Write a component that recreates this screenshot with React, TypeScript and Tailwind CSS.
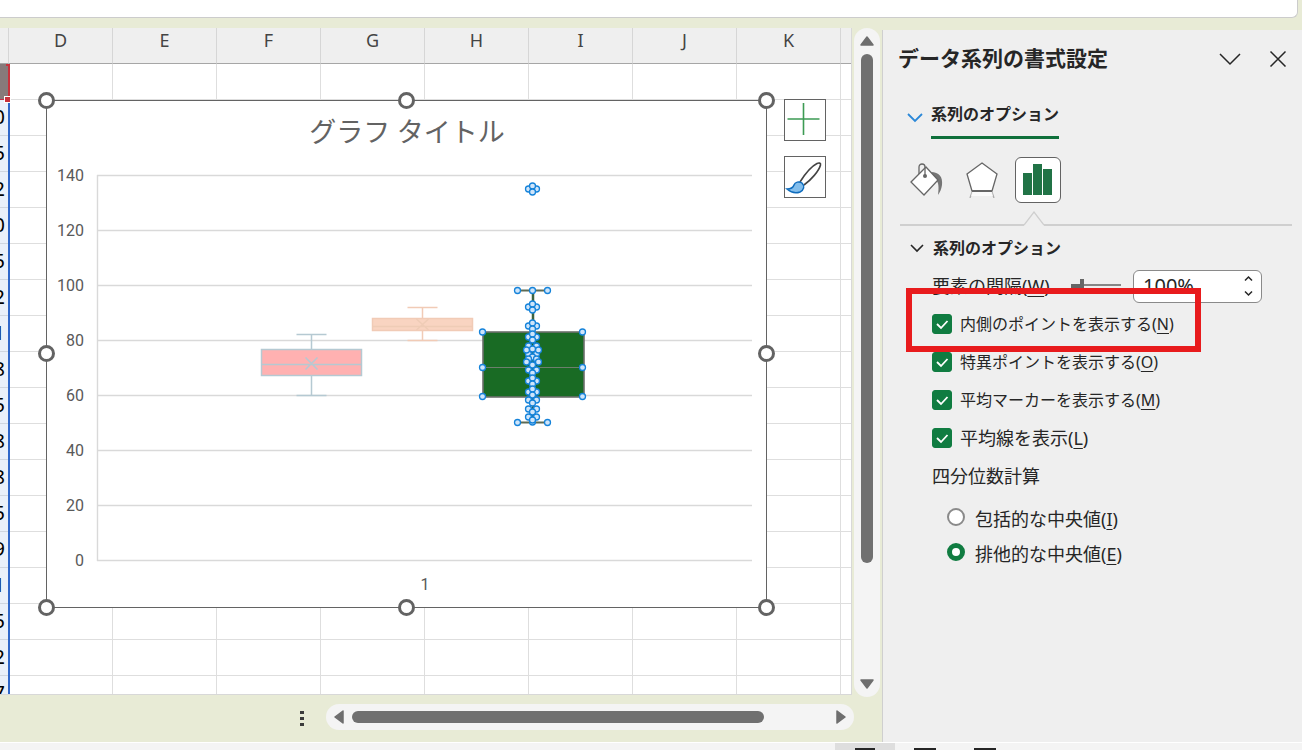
import { useState } from 'react'

const COLUMNS = ['D', 'E', 'F', 'G', 'H', 'I', 'J', 'K']

// null is the filled header cell of the selected series
const CELLS = [null, 0, 5, 2, 0, 5, 2, 1, 8, 5, 8, 8, 5, 9, 1, 5, 2, 7]

const TICKS = [140, 120, 100, 80, 60, 40, 20, 0]

const yFor = (v: number) => 460.5 - v * 2.75

// [y, horizontal spread] of the inner and outlier points of the third series
const POINTS: [number, number][] = [
  [89, 4], [86, 0], [92, 0],
  [207, 4], [204, 0], [210, 0],
  [226, 4], [223, 0], [229, 0],
  [237, 4], [234, 0], [240, 0],
  [246, 4], [254, 4], [250, 6], [249, 0], [257, 0],
  [259, 4], [262, 6], [265, 0],
  [270, 4], [273, 0],
  [281, 4], [278, 0], [284, 0],
  [292, 4], [289, 0], [295, 0],
  [300, 4], [303, 0],
  [309, 4], [312, 0],
  [317, 4], [322, 0], [320, 0],
]

const CORNERS: [number, number][] = [
  [471.5, 190.5], [486.5, 190.5], [501.5, 190.5],
  [436.5, 232], [536.5, 232],
  [436.5, 267.5], [536.5, 267.5],
  [436.5, 296.5], [536.5, 296.5],
  [471.5, 322.5], [501.5, 322.5],
]

const FRAME_HANDLES: [number, number][] = [
  [0.5, 0.5], [360.5, 0.5], [720.5, 0.5],
  [0.5, 253.5], [720.5, 253.5],
  [0.5, 507.5], [360.5, 507.5], [720.5, 507.5],
]

function Dot({ x, y }: { x: number; y: number }) {
  return <circle cx={x} cy={y} r="3" fill="#cfe5fa" stroke="#1583da" strokeWidth="1.3" />
}

function Chart() {
  return (
    <svg
      className="absolute top-16 left-[38px] font-['Roboto','Noto_Sans_CJK_JP',sans-serif]"
      width="737"
      height="524"
      viewBox="-8 -8 737 524"
      role="img"
      aria-label="グラフ タイトル"
    >
      <rect x="0.5" y="0.5" width="720" height="507" fill="#fff" stroke="#636363" />
      <text x="361" y="42" textAnchor="middle" fontSize="27" fill="#636363">
        グラフ タイトル
      </text>

      {TICKS.map((t) => (
        <g key={t}>
          <line x1="51" x2="706" y1={yFor(t)} y2={yFor(t)} stroke="#d9d9d9" strokeWidth="1.4" />
          <text x="38" y={yFor(t) + 5} textAnchor="end" fontSize="16" fill="#595959">
            {t}
          </text>
        </g>
      ))}
      <line x1="51.5" x2="51.5" y1="75" y2="461" stroke="#d9d9d9" strokeWidth="1.4" />
      <text x="379" y="490" textAnchor="middle" fontSize="16" fill="#595959">
        1
      </text>

      {/* Series 1 */}
      <g stroke="#b5c9d2" strokeWidth="1.5" fill="none">
        <path d="M250.5 234.5h30M265.5 234.5V249M265.5 276v19.5M250.5 295.5h30" />
        <rect x="215.5" y="249.5" width="100" height="26" fill="#ffb1b1" />
        <path d="M215.5 264.5h100M259.5 257.5l12 12M271.5 257.5l-12 12" />
      </g>

      {/* Series 2 */}
      <g stroke="#f1cbb6" strokeWidth="1.5" fill="none">
        <path d="M361.5 207.5h30M376.5 207.5V218M376.5 231v9.5M361.5 240.5h30" />
        <rect x="326.5" y="218.5" width="100" height="12" fill="#f9d4c1" />
        <path d="M326.5 226.5h100M370.5 219l12 11M382.5 219l-12 11" stroke="#efccb6" />
      </g>

      {/* Series 3, selected */}
      <path d="M471.5 190.5h30M471.5 322.5h30" stroke="#5c6b55" strokeWidth="2" />
      <path d="M487 190.5V232M487 297v25.5" stroke="#3c6340" strokeWidth="2.5" />
      <rect x="437" y="232" width="101" height="65" fill="#196b24" stroke="#6c706c" strokeWidth="1.6" />
      <path d="M437 267.5h100" stroke="#6c7f6c" />
      {POINTS.map(([y, spread]) =>
        spread ? (
          <g key={`${y}-${spread}`}>
            <Dot x={486.5 - spread} y={y} />
            <Dot x={486.5 + spread} y={y} />
          </g>
        ) : (
          <Dot key={`${y}-0`} x={486.5} y={y} />
        ),
      )}
      {CORNERS.map(([x, y]) => (
        <Dot key={`${x}-${y}`} x={x} y={y} />
      ))}

      {FRAME_HANDLES.map(([x, y]) => (
        <circle key={`${x}-${y}`} cx={x} cy={y} r="7" fill="#fff" stroke="#636363" strokeWidth="3" />
      ))}
    </svg>
  )
}

function ChartButtons() {
  return (
    <div className="absolute top-[71px] left-[784px] flex flex-col gap-[15px]">
      <button className="h-[42px] w-[42px] border border-[#636363] bg-white" aria-label="グラフ要素">
        <svg width="40" height="40" viewBox="0 0 40 40">
          <path d="M18.5 3v32M2.5 19h32" stroke="#3d9b54" strokeWidth="1.6" />
        </svg>
      </button>
      <button className="h-[42px] w-[42px] border border-[#636363] bg-white" aria-label="グラフ スタイル">
        <svg width="40" height="40" viewBox="0 0 40 40" fill="none">
          <path
            d="M15 25C20 17 27 9 32 6.500C34 5.500 36 6 35.500 8C34 14 26 23 19 28"
            stroke="#444"
            strokeWidth="1.6"
          />
          <path
            d="M2 32c4 0 6-1 7-4 1-3 5-4 8-2 3 3 2 7-2 9-4 1.500-9 .5-13-3z"
            fill="#83beec"
            stroke="#0f6cbd"
            strokeWidth="1.5"
          />
        </svg>
      </button>
    </div>
  )
}

function Sheet() {
  return (
    <div className="relative min-h-0 flex-1 overflow-hidden border-r border-b border-[#d8d8d8] bg-white">
      <table className="w-full table-fixed border-separate border-spacing-0 text-lg leading-none text-[#444]">
        <colgroup>
          <col className="w-[9px]" />
          {COLUMNS.map((c) => (
            <col key={c} className="w-[104px]" />
          ))}
          <col />
        </colgroup>
        <thead>
          <tr className="h-9 bg-[#efefef]">
            <th className="border-r border-b border-r-[#d6d6d6] border-b-[#a6a6a6] p-0" />
            {COLUMNS.map((c) => (
              <th
                key={c}
                className="border-r border-b border-r-[#d6d6d6] border-b-[#a6a6a6] p-0 pb-3 font-normal"
              >
                {c}
              </th>
            ))}
            <th className="border-b border-[#a6a6a6] p-0" />
          </tr>
        </thead>
        <tbody>
          {CELLS.map((n, i) => (
            <tr key={i} className="h-9">
              {n === null ? (
                <td className="relative border-r border-b border-r-white border-b-[#c4314b] bg-[#877a7a] p-0">
                  <span className="absolute top-0 -right-0.5 h-0.5 w-1 bg-[#c8323c]" />
                  <span className="absolute top-0 -right-0.5 h-8 w-0.5 bg-[#c8323c]" />
                  <span className="absolute -right-[3px] -bottom-1 z-10 h-[7px] w-[7px] border border-white bg-[#c8323c]" />
                </td>
              ) : (
                <td className="relative border-r border-b border-r-white border-b-[#cfd6e0] bg-[#e9f0fa] p-0">
                  <span className="flex justify-end pr-[3px] pb-0.5 text-xl leading-5 text-black">{n}</span>
                  <span className="absolute top-0 -right-0.5 h-9 w-0.5 bg-[#2f67c9]" />
                </td>
              )}
              {COLUMNS.map((c) => (
                <td key={c} className="border-r border-b border-[#dedede] p-0" />
              ))}
              <td className="border-b border-[#dedede] p-0" />
            </tr>
          ))}
        </tbody>
      </table>
      <Chart />
      <ChartButtons />
    </div>
  )
}

function Arrow({ className }: { className: string }) {
  return (
    <svg className={className} width="14" height="10" viewBox="0 0 14 10">
      <path
        d="M7 1 13 9H1z"
        fill="#6e6e6e"
        stroke="#6e6e6e"
        strokeWidth="1.500"
        strokeLinejoin="round"
      />
    </svg>
  )
}

function VerticalScroll() {
  return (
    <div className="mx-0.5 mb-[45px] flex w-[26px] flex-col items-center rounded-full bg-[#f4f4f4] py-2">
      <button aria-label="上へ">
        <Arrow className="block" />
      </button>
      <div className="mt-2 w-3 flex-1 pb-[116px]">
        <div className="h-full rounded-full bg-[#707070]" />
      </div>
      <button aria-label="下へ">
        <Arrow className="block rotate-180" />
      </button>
    </div>
  )
}

function BottomStrip() {
  return (
    <div className="flex h-[47px] items-start pt-[9px]">
      <div className="mt-[7px] mr-[22px] ml-auto flex flex-col gap-[3px]">
        <span className="h-[3px] w-1 bg-[#3b3b3b]" />
        <span className="h-[3px] w-1 bg-[#3b3b3b]" />
        <span className="h-[3px] w-1 bg-[#3b3b3b]" />
      </div>
      <div className="-mr-0.5 flex h-[26px] w-[528px] items-center rounded-full bg-[#f4f4f4] px-1.5">
        <button aria-label="左へ">
          <Arrow className="block -rotate-90" />
        </button>
        <div className="ml-1.5 flex-1 pr-[70px]">
          <div className="h-3 rounded-full bg-[#707070]" />
        </div>
        <button aria-label="右へ">
          <Arrow className="block rotate-90" />
        </button>
      </div>
    </div>
  )
}

function CheckRow({
  label,
  hotkey,
  wide,
  marked,
}: {
  label: string
  hotkey: string
  wide?: boolean
  marked?: boolean
}) {
  const [on, setOn] = useState(true)
  return (
    <div className="relative flex h-[38px] items-center">
      <label className="flex items-center gap-2">
        <span className="grid">
          <input
            type="checkbox"
            checked={on}
            onChange={(e) => setOn(e.target.checked)}
            className="col-start-1 row-start-1 h-5 w-5 appearance-none rounded-[3px] border border-[#8a8a8a] bg-white checked:border-[#107c41] checked:bg-[#107c41]"
          />
          <svg className="pointer-events-none col-start-1 row-start-1" width="20" height="20" viewBox="0 0 20 20">
            <path d="M5 10l4 4 6.500-7" fill="none" stroke="#fff" strokeWidth="1.800" />
          </svg>
        </span>
        <span className={wide ? 'text-lg leading-6' : 'text-base leading-6'}>
          {label}(<u className="underline-offset-3">{hotkey}</u>)
        </span>
      </label>
      {marked && (
        <span className="pointer-events-none absolute -top-[17px] -bottom-[9px] -left-[26px] z-10 w-[295px] border-6 border-[#e81b1d]" />
      )}
    </div>
  )
}

function RadioRow({
  label,
  hotkey,
  checked,
  onChange,
}: {
  label: string
  hotkey: string
  checked: boolean
  onChange: () => void
}) {
  return (
    <label className="flex h-[35px] items-start gap-2.5 text-lg leading-6">
      <input
        type="radio"
        name="quartile"
        checked={checked}
        onChange={onChange}
        className="mt-[7px] h-[18px] w-[18px] appearance-none rounded-full border-2 border-[#8a8a8a] bg-white checked:border-5 checked:border-[#107c41]"
      />
      <span className="pt-1.5">
        {label}(<u className="underline-offset-3">{hotkey}</u>)
      </span>
    </label>
  )
}

function FormatPane() {
  const [gap, setGap] = useState(100)
  const [quartile, setQuartile] = useState('exclusive')

  return (
    <aside className="mt-0.5 w-[420px] shrink-0 border-l border-[#cfcfcf] bg-[#efefef] pr-2.5 pl-[15px] text-[#262626]">
      <header className="flex h-14 items-center">
        <h2 className="flex-1 text-[21px] leading-8 font-bold">データ系列の書式設定</h2>
        <button className="mr-7" aria-label="作業ウィンドウ オプション">
          <svg width="22" height="20" viewBox="0 0 22 20">
            <path d="M1 6l10 10L21 6" fill="none" stroke="#262626" strokeWidth="1.500" />
          </svg>
        </button>
        <button className="mr-[5px]" aria-label="閉じる">
          <svg width="18" height="18" viewBox="0 0 18 18">
            <path d="M1.500 2.500l15 15M16.500 2.500l-15 15" stroke="#262626" strokeWidth="1.500" />
          </svg>
        </button>
      </header>

      <button className="mt-3.5 ml-2 flex items-start text-base leading-6 font-bold">
        <svg className="mt-3 mr-2" width="17" height="12" viewBox="0 0 17 12">
          <path d="M2 2l7 7 7-7" fill="none" stroke="#2b88d8" strokeWidth="1.800" />
        </svg>
        <span className="border-b-3 border-[#0f703b] pt-0.5 pb-2.5">系列のオプション</span>
      </button>

      <div className="mt-[18px] ml-[11px] flex items-center">
        <button className="mr-[19px]" aria-label="塗りつぶしと線">
          <svg width="36" height="36" viewBox="0 0 36 36" fill="none">
            <path d="M22 10c8 0 12 5 11 13-.5 4-2 7-4 10 1-8 1-13-3-16z" fill="#757575" />
            <path d="M2 20 17 5 29 18 15 33z" fill="#fff" stroke="#666" strokeWidth="1.300" />
            <path d="M10 12V5c0-4 6-4 6 0v9" stroke="#666" strokeWidth="1.300" />
            <circle cx="16" cy="14" r="2" fill="#666" />
          </svg>
        </button>
        <button className="mr-[15px]" aria-label="効果">
          <svg width="36" height="36" viewBox="0 0 36 36">
            <path d="M18 1 33 12 28 29H8L3 12z" fill="#fff" stroke="#666" strokeWidth="1.300" />
            <path d="M8 30 6 36M28 30l2 6" stroke="#aaa" strokeWidth="1.300" />
            <path d="M8 30h20l1 4H7z" fill="#fff" opacity=".7" />
            <path d="M8 29h20" stroke="#666" strokeWidth="2" />
          </svg>
        </button>
        <button
          className="flex h-[46px] w-[46px] items-center justify-center rounded-md border border-[#636363] bg-white"
          aria-label="系列のオプション"
        >
          <svg width="30" height="32" viewBox="0 0 30 32" fill="#217346">
            <path d="M0 9h9v22H0zM10 0h9v31h-9zM20 5h9v26h-9z" />
          </svg>
        </button>
      </div>

      <div className="mt-2 ml-0.5 flex items-end">
        <span className="h-0.5 w-[124px] bg-[#cfcfcf]" />
        <svg className="block" width="20" height="15" viewBox="0 0 20 15">
          <path d="M0 14 10 1l10 13" fill="none" stroke="#cfcfcf" strokeWidth="1.300" />
        </svg>
        <span className="h-0.5 flex-1 bg-[#cfcfcf]" />
      </div>

      <button className="mt-2.5 ml-[11px] flex items-center gap-2 text-base leading-6 font-bold">
        <svg width="16" height="12" viewBox="0 0 16 12">
          <path d="M2 3l6 6 6-6" fill="none" stroke="#262626" strokeWidth="1.600" />
        </svg>
        系列のオプション
      </button>

      <section className="mt-[7px] ml-[34px]">
        <div className="flex h-[38px] items-center">
          <label htmlFor="gap-width" className="w-[139px] text-lg leading-6">
            要素の間隔(<u className="underline-offset-3">W</u>)
          </label>
          <input
            type="range"
            min="0"
            max="500"
            value={gap}
            onChange={(e) => setGap(Number(e.target.value))}
            aria-label="要素の間隔"
            className="h-6 w-[50px] appearance-none bg-[linear-gradient(#666,#666),linear-gradient(#868686,#868686)] bg-[length:10px_5px,100%_2px] bg-[position:0_10px,0_10px] bg-no-repeat [&::-webkit-slider-thumb]:h-3.5 [&::-webkit-slider-thumb]:w-1 [&::-webkit-slider-thumb]:appearance-none [&::-webkit-slider-thumb]:bg-[#666]"
          />
          <div className="ml-3 flex h-[33px] w-[129px] items-center rounded-md border border-[#8a8a8a] bg-white pr-2">
            <input
              id="gap-width"
              value={`${gap}%`}
              onChange={(e) => setGap(parseInt(e.target.value) || 0)}
              className="min-w-0 flex-1 bg-transparent pl-[9px] text-xl leading-6 outline-none"
            />
            <div className="flex flex-col gap-2">
              <button onClick={() => setGap(Math.min(500, gap + 1))} aria-label="増やす">
                <svg className="block" width="9" height="7" viewBox="0 0 9 7">
                  <path d="M1 5.500l3.500-3.500L8 5.500" fill="none" stroke="#262626" strokeWidth="1.500" />
                </svg>
              </button>
              <button onClick={() => setGap(Math.max(0, gap - 1))} aria-label="減らす">
                <svg className="block" width="9" height="7" viewBox="0 0 9 7">
                  <path d="M1 1.500L4.500 5 8 1.500" fill="none" stroke="#262626" strokeWidth="1.500" />
                </svg>
              </button>
            </div>
          </div>
        </div>

        <CheckRow label="内側のポイントを表示する" hotkey="N" marked />
        <CheckRow label="特異ポイントを表示する" hotkey="O" />
        <CheckRow label="平均マーカーを表示する" hotkey="M" />
        <CheckRow label="平均線を表示" hotkey="L" wide />

        <fieldset>
          <legend className="flex h-[38px] items-center text-lg leading-6">四分位数計算</legend>
          <div className="mt-1.5 ml-[15px]">
            <RadioRow
              label="包括的な中央値"
              hotkey="I"
              checked={quartile === 'inclusive'}
              onChange={() => setQuartile('inclusive')}
            />
            <RadioRow
              label="排他的な中央値"
              hotkey="E"
              checked={quartile === 'exclusive'}
              onChange={() => setQuartile('exclusive')}
            />
          </div>
        </fieldset>
      </section>
    </aside>
  )
}

export default function App() {
  return (
    <div className="flex h-screen flex-col overflow-hidden bg-[#e8ebd6] font-['Noto_Sans','Noto_Sans_CJK_JP',sans-serif]">
      <input
        aria-label="数式バー"
        className="mr-1 mb-2.5 h-[18px] shrink-0 rounded-br-md border-r border-b border-[#cccccc] bg-white outline-none"
      />

      <main className="flex min-h-0 flex-1">
        <div className="flex min-w-0 flex-1 flex-col">
          <Sheet />
          <BottomStrip />
        </div>
        <VerticalScroll />
        <FormatPane />
      </main>

      <footer className="flex h-2 shrink-0 justify-end overflow-hidden border-t border-white bg-[#f4f4f4] pr-[287px]">
        <button className="flex w-[60px] justify-center bg-[#dedede] pt-[5px]" aria-label="標準">
          <span className="h-4 w-5 border-2 border-[#262626]" />
        </button>
        <button className="flex w-[60px] justify-center pt-[5px]" aria-label="ページ レイアウト">
          <span className="h-4 w-[22px] border-2 border-[#262626]" />
        </button>
        <button className="flex w-[60px] justify-center pt-[5px]" aria-label="改ページ プレビュー">
          <span className="h-4 w-[22px] border-2 border-[#262626]" />
        </button>
      </footer>
    </div>
  )
}
